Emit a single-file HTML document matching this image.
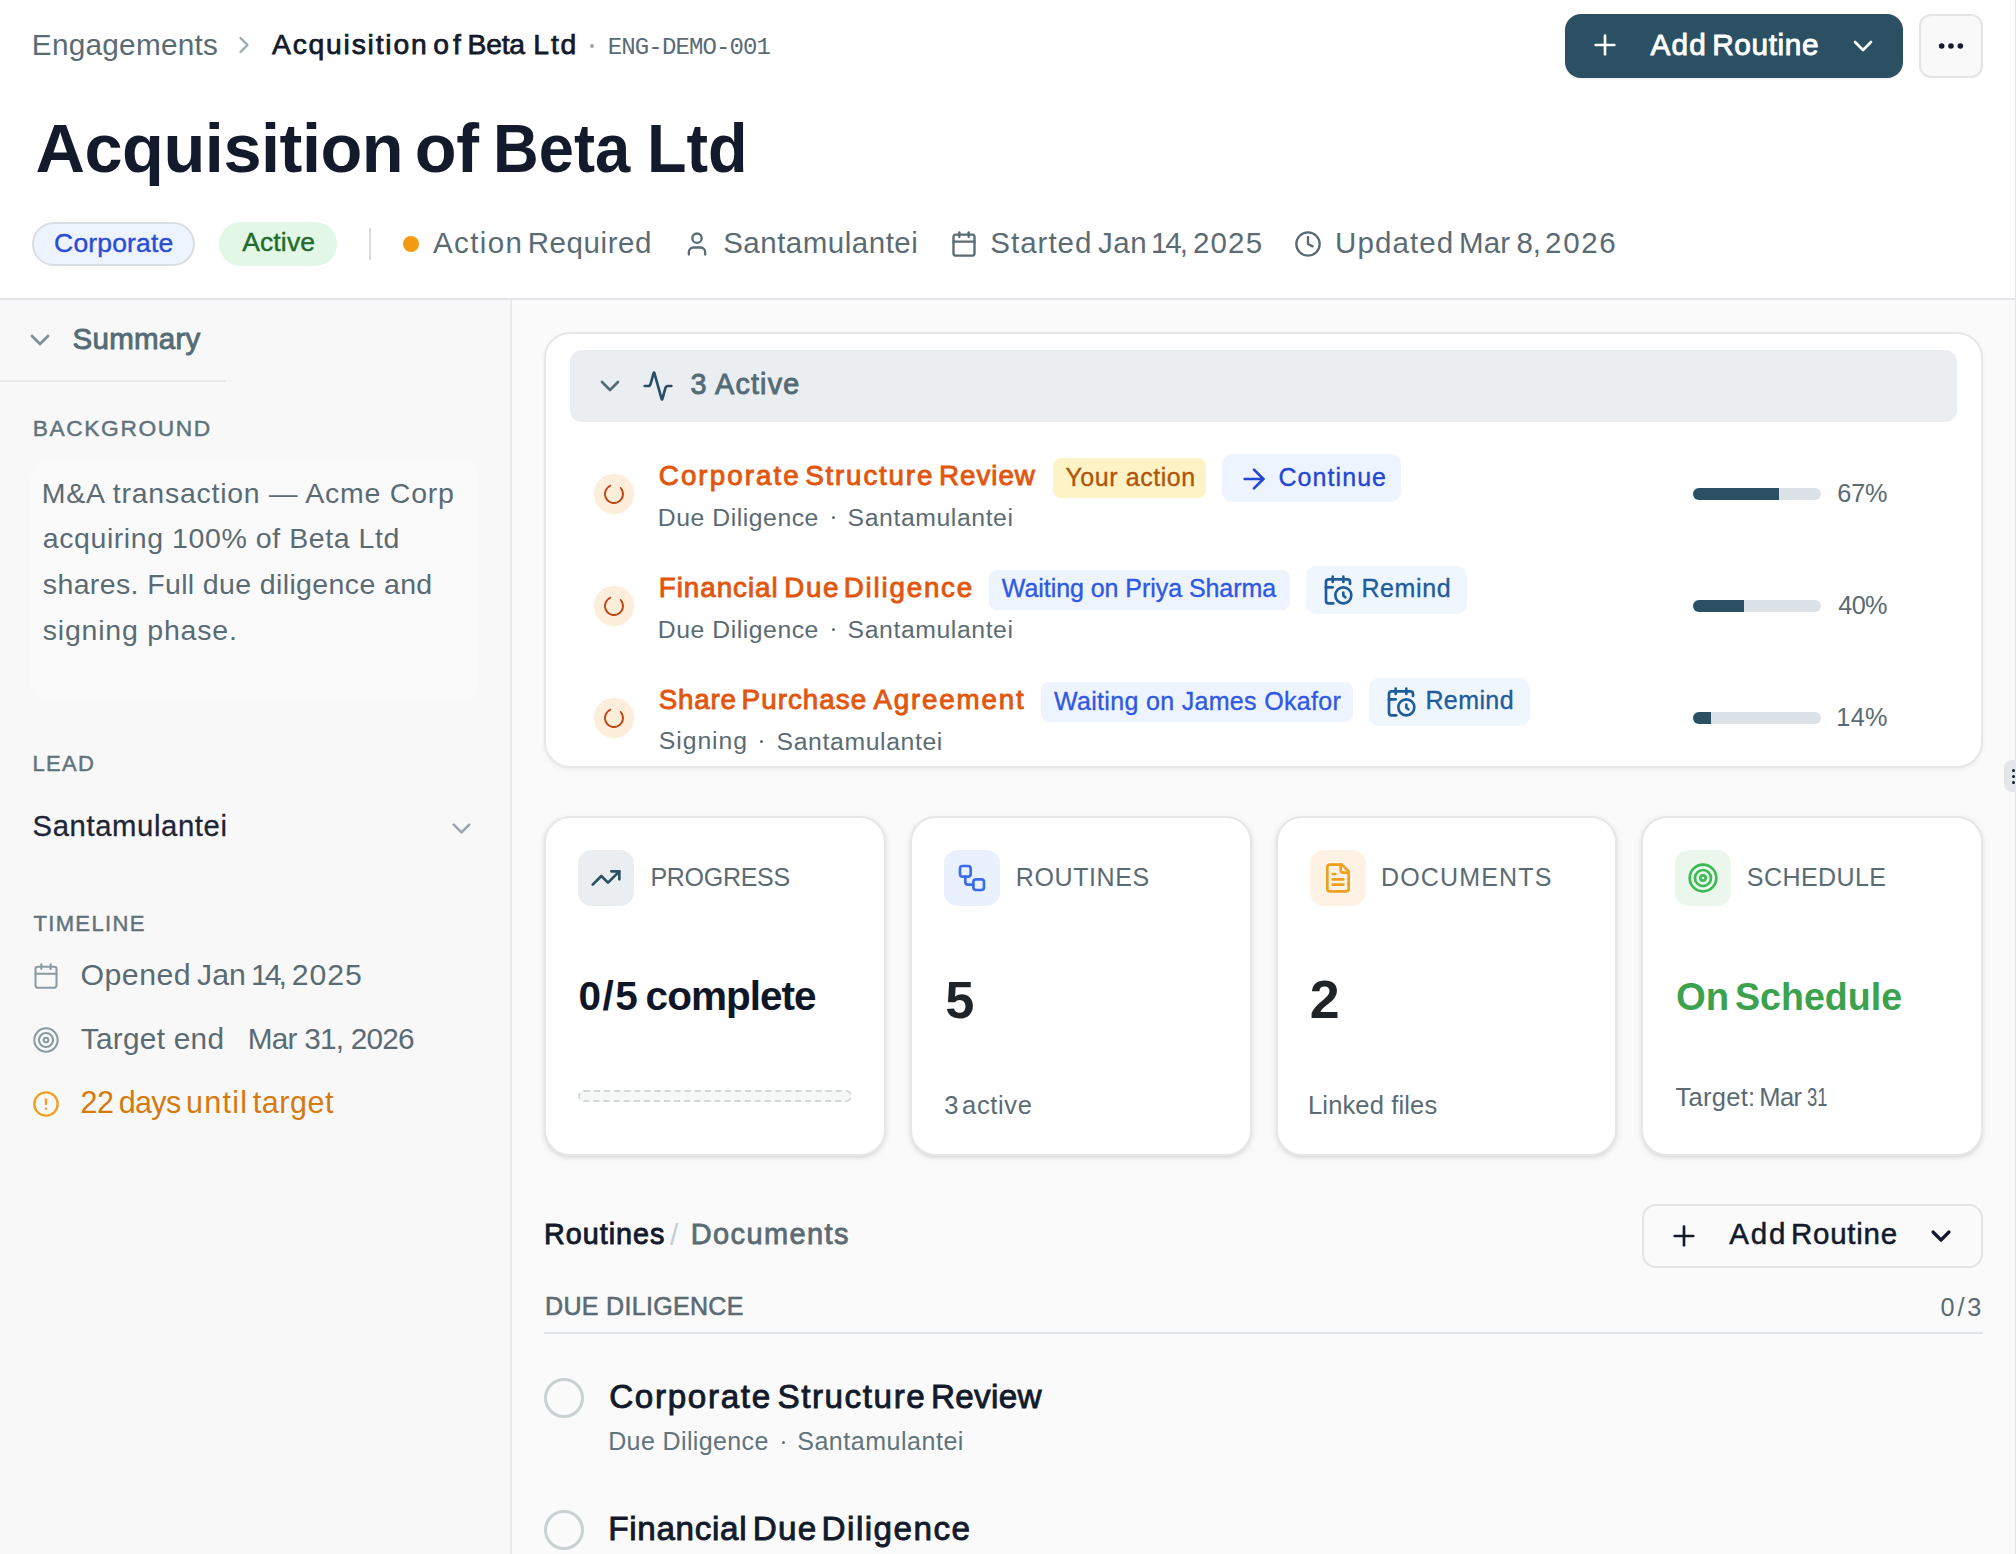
<!DOCTYPE html>
<html><head><meta charset="utf-8"><title>Acquisition of Beta Ltd</title>
<style>
html,body{margin:0;padding:0;width:2016px;height:1554px;overflow:hidden;background:#f9f9f9}
body{position:relative;font-family:"Liberation Sans",sans-serif}
.t{position:absolute;white-space:pre;}
.b{position:absolute;}
.i{position:absolute;overflow:visible}
</style></head><body>
<div class="b" style="left:0px;top:0px;width:2016px;height:298px;background:#ffffff"></div>
<div class="b" style="left:0px;top:298px;width:2016px;height:2px;background:#e3e5e8"></div>
<div class="b" style="left:0px;top:300px;width:510px;height:1254px;background:#f8f8f8"></div>
<div class="b" style="left:510px;top:300px;width:2px;height:1254px;background:#eaebed"></div>
<div class="b" style="left:512px;top:300px;width:1503px;height:1254px;background:#fafafa"></div>
<div class="b" style="left:2015px;top:0px;width:1px;height:1554px;background:#e3e5e8"></div>
<div class="t" style="left:31.80px;top:30.02px;font-size:29.75px;line-height:29.75px;letter-spacing:0.260px;font-weight:normal;color:#5a6b74;font-family:'Liberation Sans',sans-serif;">Engagements</div>
<svg class="i" style="left:230.00px;top:31.00px;" width="28" height="28" viewBox="0 0 24 24" fill="none" stroke="#9aa7ad" stroke-width="2" stroke-linecap="round" stroke-linejoin="round"><path d="m9 18 6-6-6-6"/></svg>
<div class="t" style="left:272.00px;top:29.89px;font-size:28.25px;line-height:28.25px;letter-spacing:1.800px;font-weight:normal;color:#121a2b;font-family:'Liberation Sans',sans-serif;-webkit-text-stroke:0.75px #121a2b;">Acquisition</div><div class="t" style="left:433.20px;top:29.89px;font-size:28.25px;line-height:28.25px;letter-spacing:4.200px;font-weight:normal;color:#121a2b;font-family:'Liberation Sans',sans-serif;-webkit-text-stroke:0.75px #121a2b;">of</div><div class="t" style="left:467.60px;top:29.89px;font-size:28.25px;line-height:28.25px;letter-spacing:-0.217px;font-weight:normal;color:#121a2b;font-family:'Liberation Sans',sans-serif;-webkit-text-stroke:0.75px #121a2b;">Beta</div><div class="t" style="left:533.30px;top:29.89px;font-size:28.25px;line-height:28.25px;letter-spacing:1.875px;font-weight:normal;color:#121a2b;font-family:'Liberation Sans',sans-serif;-webkit-text-stroke:0.75px #121a2b;">Ltd</div>
<div class="b" style="left:590px;top:44px;width:4px;height:4px;background:#9aa7ad;border-radius:2px"></div>
<div class="t" style="left:607.80px;top:35.61px;font-size:24.00px;line-height:24.00px;letter-spacing:-0.877px;font-weight:normal;color:#5a6b74;font-family:'Liberation Mono',monospace;">ENG-DEMO-001</div>
<div class="b" style="left:1565px;top:14px;width:338px;height:64px;background:#2b5064;border-radius:16px;box-shadow:0 1px 2px rgba(0,0,0,.08)"></div>
<svg class="i" style="left:1588.70px;top:29.40px;" width="32" height="32" viewBox="0 0 24 24" fill="none" stroke="#ffffff" stroke-width="2" stroke-linecap="round" stroke-linejoin="round"><path d="M5 12h14"/><path d="M12 5v14"/></svg>
<div class="t" style="left:1650.40px;top:29.82px;font-size:29.75px;line-height:29.75px;letter-spacing:1.225px;font-weight:normal;color:#ffffff;font-family:'Liberation Sans',sans-serif;-webkit-text-stroke:0.90px #ffffff;">Add</div><div class="t" style="left:1712.20px;top:29.82px;font-size:29.75px;line-height:29.75px;letter-spacing:0.642px;font-weight:normal;color:#ffffff;font-family:'Liberation Sans',sans-serif;-webkit-text-stroke:0.90px #ffffff;">Routine</div>
<svg class="i" style="left:1846.80px;top:30.30px;" width="32" height="32" viewBox="0 0 24 24" fill="none" stroke="#ffffff" stroke-width="2" stroke-linecap="round" stroke-linejoin="round"><path d="m6 9 6 6 6-6"/></svg>
<div class="b" style="left:1919px;top:14px;width:64px;height:64px;background:#f9f9f9;border:2px solid #e2e4e6;border-radius:12px;box-sizing:border-box"></div>
<svg class="i" style="left:1935.00px;top:29.80px;" width="32" height="32" viewBox="0 0 24 24" fill="none" stroke="#121a2b" stroke-width="2.2" stroke-linecap="round" stroke-linejoin="round"><circle cx="12" cy="12" r="1"/><circle cx="19" cy="12" r="1"/><circle cx="5" cy="12" r="1"/></svg>
<div class="t" style="left:35.50px;top:115.21px;font-size:68.50px;line-height:68.50px;letter-spacing:-0.475px;font-weight:bold;color:#121a2b;font-family:'Liberation Sans',sans-serif;">Acquisition</div>
<div class="t" style="left:414.70px;top:115.21px;font-size:68.50px;line-height:68.50px;letter-spacing:-0.300px;font-weight:bold;color:#121a2b;font-family:'Liberation Sans',sans-serif;">of</div>
<div class="t" style="left:492.90px;top:115.21px;font-size:68.50px;line-height:68.50px;letter-spacing:0.000px;font-weight:bold;color:#121a2b;font-family:'Liberation Sans',sans-serif;transform:scaleX(0.9239);transform-origin:0 0;">Beta</div>
<div class="t" style="left:647.00px;top:115.21px;font-size:68.50px;line-height:68.50px;letter-spacing:0.000px;font-weight:bold;color:#121a2b;font-family:'Liberation Sans',sans-serif;transform:scaleX(0.9454);transform-origin:0 0;">Ltd</div>
<div class="b" style="left:32px;top:222px;width:163px;height:44px;background:#eef4fd;border:2px solid #d9dee4;border-radius:22px;box-sizing:border-box"></div>
<div class="t" style="left:54.10px;top:229.87px;font-size:26.50px;line-height:26.50px;letter-spacing:0.156px;font-weight:normal;color:#2a4cd6;font-family:'Liberation Sans',sans-serif;-webkit-text-stroke:0.40px #2a4cd6;">Corporate</div>
<div class="b" style="left:219px;top:222px;width:118px;height:44px;background:#e2f7e5;border-radius:22px"></div>
<div class="t" style="left:242.20px;top:228.87px;font-size:26.50px;line-height:26.50px;letter-spacing:0.130px;font-weight:normal;color:#226b2c;font-family:'Liberation Sans',sans-serif;-webkit-text-stroke:0.40px #226b2c;">Active</div>
<div class="b" style="left:369px;top:228px;width:2px;height:32px;background:#d9dde2"></div>
<div class="b" style="left:403px;top:236px;width:16px;height:16px;background:#f29a12;border-radius:8px"></div>
<div class="t" style="left:432.90px;top:227.73px;font-size:29.50px;line-height:29.50px;letter-spacing:1.420px;font-weight:normal;color:#5a6b74;font-family:'Liberation Sans',sans-serif;">Action</div><div class="t" style="left:527.70px;top:227.73px;font-size:29.50px;line-height:29.50px;letter-spacing:0.586px;font-weight:normal;color:#5a6b74;font-family:'Liberation Sans',sans-serif;">Required</div>
<svg class="i" style="left:682.90px;top:230.10px;" width="28" height="28" viewBox="0 0 24 24" fill="none" stroke="#5a6b74" stroke-width="2" stroke-linecap="round" stroke-linejoin="round"><path d="M19 21v-2a4 4 0 0 0-4-4H9a4 4 0 0 0-4 4v2"/><circle cx="12" cy="7" r="4"/></svg>
<div class="t" style="left:723.20px;top:227.73px;font-size:29.50px;line-height:29.50px;letter-spacing:0.500px;font-weight:normal;color:#5a6b74;font-family:'Liberation Sans',sans-serif;">Santamulantei</div>
<svg class="i" style="left:949.70px;top:229.60px;" width="28" height="28" viewBox="0 0 24 24" fill="none" stroke="#5a6b74" stroke-width="2" stroke-linecap="round" stroke-linejoin="round"><path d="M8 2v4"/><path d="M16 2v4"/><rect width="18" height="18" x="3" y="4" rx="2"/><path d="M3 10h18"/></svg>
<div class="t" style="left:990.30px;top:227.73px;font-size:29.50px;line-height:29.50px;letter-spacing:1.000px;font-weight:normal;color:#5a6b74;font-family:'Liberation Sans',sans-serif;">Started</div><div class="t" style="left:1097.90px;top:227.73px;font-size:29.50px;line-height:29.50px;letter-spacing:0.625px;font-weight:normal;color:#5a6b74;font-family:'Liberation Sans',sans-serif;">Jan</div><div class="t" style="left:1151.00px;top:227.73px;font-size:29.50px;line-height:29.50px;letter-spacing:-2.050px;font-weight:normal;color:#5a6b74;font-family:'Liberation Sans',sans-serif;">14,</div><div class="t" style="left:1192.90px;top:227.73px;font-size:29.50px;line-height:29.50px;letter-spacing:1.183px;font-weight:normal;color:#5a6b74;font-family:'Liberation Sans',sans-serif;">2025</div>
<svg class="i" style="left:1293.80px;top:229.60px;" width="28" height="28" viewBox="0 0 24 24" fill="none" stroke="#5a6b74" stroke-width="2" stroke-linecap="round" stroke-linejoin="round"><circle cx="12" cy="12" r="10"/><polyline points="12 6 12 12 16 14"/></svg>
<div class="t" style="left:1335.10px;top:227.73px;font-size:29.50px;line-height:29.50px;letter-spacing:1.108px;font-weight:normal;color:#5a6b74;font-family:'Liberation Sans',sans-serif;">Updated</div><div class="t" style="left:1459.10px;top:227.73px;font-size:29.50px;line-height:29.50px;letter-spacing:0.100px;font-weight:normal;color:#5a6b74;font-family:'Liberation Sans',sans-serif;">Mar</div><div class="t" style="left:1516.40px;top:227.73px;font-size:29.50px;line-height:29.50px;letter-spacing:0.000px;font-weight:normal;color:#5a6b74;font-family:'Liberation Sans',sans-serif;">8,</div><div class="t" style="left:1545.10px;top:227.73px;font-size:29.50px;line-height:29.50px;letter-spacing:1.650px;font-weight:normal;color:#5a6b74;font-family:'Liberation Sans',sans-serif;">2026</div>
<svg class="i" style="left:23.90px;top:323.80px;" width="32" height="32" viewBox="0 0 24 24" fill="none" stroke="#7f9097" stroke-width="2" stroke-linecap="round" stroke-linejoin="round"><path d="m6 9 6 6 6-6"/></svg>
<div class="t" style="left:72.60px;top:323.83px;font-size:29.50px;line-height:29.50px;letter-spacing:0.233px;font-weight:normal;color:#556b75;font-family:'Liberation Sans',sans-serif;-webkit-text-stroke:0.90px #556b75;">Summary</div>
<div class="b" style="left:0px;top:380px;width:226px;height:2px;background:#e6e8ea"></div>
<div class="t" style="left:32.80px;top:416.74px;font-size:22.75px;line-height:22.75px;letter-spacing:1.594px;font-weight:normal;color:#60737c;font-family:'Liberation Sans',sans-serif;-webkit-text-stroke:0.45px #60737c;">BACKGROUND</div>
<div class="b" style="left:31px;top:460px;width:448px;height:241px;background:#fafafa;border-radius:16px"></div>
<div class="t" style="left:41.80px;top:478.77px;font-size:28.50px;line-height:28.50px;letter-spacing:0.738px;font-weight:normal;color:#5a6b74;font-family:'Liberation Sans',sans-serif;">M&amp;A transaction — Acme Corp</div>
<div class="t" style="left:42.80px;top:524.37px;font-size:28.50px;line-height:28.50px;letter-spacing:0.574px;font-weight:normal;color:#5a6b74;font-family:'Liberation Sans',sans-serif;">acquiring 100% of Beta Ltd</div>
<div class="t" style="left:42.80px;top:569.97px;font-size:28.50px;line-height:28.50px;letter-spacing:0.371px;font-weight:normal;color:#5a6b74;font-family:'Liberation Sans',sans-serif;">shares. Full due diligence and</div>
<div class="t" style="left:42.80px;top:615.57px;font-size:28.50px;line-height:28.50px;letter-spacing:0.785px;font-weight:normal;color:#5a6b74;font-family:'Liberation Sans',sans-serif;">signing phase.</div>
<div class="t" style="left:32.60px;top:753.08px;font-size:22.00px;line-height:22.00px;letter-spacing:1.250px;font-weight:normal;color:#60737c;font-family:'Liberation Sans',sans-serif;-webkit-text-stroke:0.45px #60737c;">LEAD</div>
<div class="t" style="left:32.60px;top:811.64px;font-size:29.25px;line-height:29.25px;letter-spacing:0.617px;font-weight:normal;color:#1e2636;font-family:'Liberation Sans',sans-serif;-webkit-text-stroke:0.30px #1e2636;">Santamulantei</div>
<svg class="i" style="left:446.40px;top:812.50px;" width="31" height="31" viewBox="0 0 24 24" fill="none" stroke="#9ca3af" stroke-width="2" stroke-linecap="round" stroke-linejoin="round"><path d="m6 9 6 6 6-6"/></svg>
<div class="t" style="left:33.40px;top:912.98px;font-size:22.00px;line-height:22.00px;letter-spacing:1.364px;font-weight:normal;color:#60737c;font-family:'Liberation Sans',sans-serif;-webkit-text-stroke:0.45px #60737c;">TIMELINE</div>
<svg class="i" style="left:31.90px;top:962.00px;" width="28" height="28" viewBox="0 0 24 24" fill="none" stroke="#8a9aa1" stroke-width="1.75" stroke-linecap="round" stroke-linejoin="round"><path d="M8 2v4"/><path d="M16 2v4"/><rect width="18" height="18" x="3" y="4" rx="2"/><path d="M3 10h18"/></svg>
<div class="t" style="left:80.50px;top:959.79px;font-size:30.25px;line-height:30.25px;letter-spacing:0.490px;font-weight:normal;color:#5a6b74;font-family:'Liberation Sans',sans-serif;">Opened</div><div class="t" style="left:197.00px;top:959.79px;font-size:30.25px;line-height:30.25px;letter-spacing:0.025px;font-weight:normal;color:#5a6b74;font-family:'Liberation Sans',sans-serif;">Jan</div><div class="t" style="left:250.90px;top:959.79px;font-size:30.25px;line-height:30.25px;letter-spacing:-2.975px;font-weight:normal;color:#5a6b74;font-family:'Liberation Sans',sans-serif;">14,</div><div class="t" style="left:291.70px;top:959.79px;font-size:30.25px;line-height:30.25px;letter-spacing:0.933px;font-weight:normal;color:#5a6b74;font-family:'Liberation Sans',sans-serif;">2025</div>
<svg class="i" style="left:31.90px;top:1025.80px;" width="28" height="28" viewBox="0 0 24 24" fill="none" stroke="#8a9aa1" stroke-width="1.75" stroke-linecap="round" stroke-linejoin="round"><circle cx="12" cy="12" r="10"/><circle cx="12" cy="12" r="6"/><circle cx="12" cy="12" r="2"/></svg>
<div class="t" style="left:80.80px;top:1023.82px;font-size:29.75px;line-height:29.75px;letter-spacing:0.289px;font-weight:normal;color:#5a6b74;font-family:'Liberation Sans',sans-serif;">Target end</div>
<div class="t" style="left:247.80px;top:1023.82px;font-size:29.75px;line-height:29.75px;letter-spacing:-0.782px;font-weight:normal;color:#5a6b74;font-family:'Liberation Sans',sans-serif;">Mar 31, 2026</div>
<svg class="i" style="left:31.90px;top:1090.00px;" width="28" height="28" viewBox="0 0 24 24" fill="none" stroke="#f0a020" stroke-width="2" stroke-linecap="round" stroke-linejoin="round"><circle cx="12" cy="12" r="10"/><line x1="12" x2="12" y1="8" y2="12"/><line x1="12" x2="12.01" y1="16" y2="16"/></svg>
<div class="t" style="left:80.50px;top:1087.08px;font-size:30.50px;line-height:30.50px;letter-spacing:-0.550px;font-weight:normal;color:#d57a0e;font-family:'Liberation Sans',sans-serif;">22</div><div class="t" style="left:118.80px;top:1087.08px;font-size:30.50px;line-height:30.50px;letter-spacing:-0.683px;font-weight:normal;color:#d57a0e;font-family:'Liberation Sans',sans-serif;">days</div><div class="t" style="left:186.10px;top:1087.08px;font-size:30.50px;line-height:30.50px;letter-spacing:1.238px;font-weight:normal;color:#d57a0e;font-family:'Liberation Sans',sans-serif;">until</div><div class="t" style="left:252.70px;top:1087.08px;font-size:30.50px;line-height:30.50px;letter-spacing:0.580px;font-weight:normal;color:#d57a0e;font-family:'Liberation Sans',sans-serif;">target</div>
<div class="b" style="left:544px;top:332px;width:1439px;height:436px;background:#ffffff;border:2px solid #e5e7e9;border-radius:26px;box-sizing:border-box;box-shadow:0 2px 4px rgba(0,0,0,.05)"></div>
<div class="b" style="left:570px;top:350px;width:1387px;height:72px;background:#eaeef1;border-radius:12px"></div>
<svg class="i" style="left:593.90px;top:370.30px;" width="32" height="32" viewBox="0 0 24 24" fill="none" stroke="#556b75" stroke-width="2" stroke-linecap="round" stroke-linejoin="round"><path d="m6 9 6 6 6-6"/></svg>
<svg class="i" style="left:642.30px;top:369.70px;" width="32" height="32" viewBox="0 0 24 24" fill="none" stroke="#264f66" stroke-width="2" stroke-linecap="round" stroke-linejoin="round"><path d="M22 12h-2.48a2 2 0 0 0-1.93 1.46l-2.35 8.36a.25.25 0 0 1-.48 0L9.24 2.18a.25.25 0 0 0-.48 0l-2.35 8.36A2 2 0 0 1 4.49 12H2"/></svg>
<div class="t" style="left:690.40px;top:370.06px;font-size:28.75px;line-height:28.75px;letter-spacing:1.157px;font-weight:normal;color:#556b75;font-family:'Liberation Sans',sans-serif;-webkit-text-stroke:0.90px #556b75;">3 Active</div>
<div class="b" style="left:594px;top:474px;width:40px;height:40px;background:#fdeedb;border-radius:20px"></div>
<svg class="i" style="left:602.00px;top:482.00px;transform:rotate(-42deg)" width="24" height="24" viewBox="0 0 24 24" fill="none" stroke="#c2410c" stroke-width="1.8" stroke-linecap="round" stroke-linejoin="round"><path d="M21 12a9 9 0 1 1-6.219-8.56"/></svg>
<div class="t" style="left:658.80px;top:462.31px;font-size:27.75px;line-height:27.75px;letter-spacing:2.050px;font-weight:normal;color:#e2560d;font-family:'Liberation Sans',sans-serif;-webkit-text-stroke:0.90px #e2560d;">Corporate</div><div class="t" style="left:805.20px;top:462.31px;font-size:27.75px;line-height:27.75px;letter-spacing:1.825px;font-weight:normal;color:#e2560d;font-family:'Liberation Sans',sans-serif;-webkit-text-stroke:0.90px #e2560d;">Structure</div><div class="t" style="left:939.00px;top:462.31px;font-size:27.75px;line-height:27.75px;letter-spacing:0.980px;font-weight:normal;color:#e2560d;font-family:'Liberation Sans',sans-serif;-webkit-text-stroke:0.90px #e2560d;">Review</div>
<div class="t" style="left:657.80px;top:506.15px;font-size:24.75px;line-height:24.75px;letter-spacing:0.542px;font-weight:normal;color:#5a6b74;font-family:'Liberation Sans',sans-serif;">Due Diligence</div>
<div class="b" style="left:831.5px;top:516.2px;width:3px;height:3px;background:#5a6b74;border-radius:2px"></div>
<div class="t" style="left:847.60px;top:506.15px;font-size:24.75px;line-height:24.75px;letter-spacing:0.596px;font-weight:normal;color:#5a6b74;font-family:'Liberation Sans',sans-serif;">Santamulantei</div>
<div class="b" style="left:1693px;top:488px;width:128px;height:12px;background:#dce3e8;border-radius:6px;overflow:hidden"></div>
<div class="b" style="left:1693px;top:488px;width:86px;height:12px;background:#2b5064;border-radius:6px 0 0 6px"></div>
<div class="t" style="left:1837.20px;top:480.83px;font-size:25.25px;line-height:25.25px;letter-spacing:-0.075px;font-weight:normal;color:#5a6b74;font-family:'Liberation Sans',sans-serif;">67%</div>
<div class="b" style="left:594px;top:586px;width:40px;height:40px;background:#fdeedb;border-radius:20px"></div>
<svg class="i" style="left:602.00px;top:594.00px;transform:rotate(-42deg)" width="24" height="24" viewBox="0 0 24 24" fill="none" stroke="#c2410c" stroke-width="1.8" stroke-linecap="round" stroke-linejoin="round"><path d="M21 12a9 9 0 1 1-6.219-8.56"/></svg>
<div class="t" style="left:658.80px;top:574.31px;font-size:27.75px;line-height:27.75px;letter-spacing:0.969px;font-weight:normal;color:#e2560d;font-family:'Liberation Sans',sans-serif;-webkit-text-stroke:0.90px #e2560d;">Financial</div><div class="t" style="left:784.20px;top:574.31px;font-size:27.75px;line-height:27.75px;letter-spacing:1.650px;font-weight:normal;color:#e2560d;font-family:'Liberation Sans',sans-serif;-webkit-text-stroke:0.90px #e2560d;">Due</div><div class="t" style="left:843.80px;top:574.31px;font-size:27.75px;line-height:27.75px;letter-spacing:1.781px;font-weight:normal;color:#e2560d;font-family:'Liberation Sans',sans-serif;-webkit-text-stroke:0.90px #e2560d;">Diligence</div>
<div class="t" style="left:657.80px;top:618.15px;font-size:24.75px;line-height:24.75px;letter-spacing:0.542px;font-weight:normal;color:#5a6b74;font-family:'Liberation Sans',sans-serif;">Due Diligence</div>
<div class="b" style="left:831.5px;top:628.2px;width:3px;height:3px;background:#5a6b74;border-radius:2px"></div>
<div class="t" style="left:847.60px;top:618.15px;font-size:24.75px;line-height:24.75px;letter-spacing:0.596px;font-weight:normal;color:#5a6b74;font-family:'Liberation Sans',sans-serif;">Santamulantei</div>
<div class="b" style="left:1693px;top:600px;width:128px;height:12px;background:#dce3e8;border-radius:6px;overflow:hidden"></div>
<div class="b" style="left:1693px;top:600px;width:51px;height:12px;background:#2b5064;border-radius:6px 0 0 6px"></div>
<div class="t" style="left:1838.20px;top:592.83px;font-size:25.25px;line-height:25.25px;letter-spacing:-0.575px;font-weight:normal;color:#5a6b74;font-family:'Liberation Sans',sans-serif;">40%</div>
<div class="b" style="left:594px;top:698px;width:40px;height:40px;background:#fdeedb;border-radius:20px"></div>
<svg class="i" style="left:602.00px;top:706.00px;transform:rotate(-42deg)" width="24" height="24" viewBox="0 0 24 24" fill="none" stroke="#c2410c" stroke-width="1.8" stroke-linecap="round" stroke-linejoin="round"><path d="M21 12a9 9 0 1 1-6.219-8.56"/></svg>
<div class="t" style="left:658.80px;top:686.31px;font-size:27.75px;line-height:27.75px;letter-spacing:0.788px;font-weight:normal;color:#e2560d;font-family:'Liberation Sans',sans-serif;-webkit-text-stroke:0.90px #e2560d;">Share</div><div class="t" style="left:741.60px;top:686.31px;font-size:27.75px;line-height:27.75px;letter-spacing:1.050px;font-weight:normal;color:#e2560d;font-family:'Liberation Sans',sans-serif;-webkit-text-stroke:0.90px #e2560d;">Purchase</div><div class="t" style="left:873.40px;top:686.31px;font-size:27.75px;line-height:27.75px;letter-spacing:1.831px;font-weight:normal;color:#e2560d;font-family:'Liberation Sans',sans-serif;-webkit-text-stroke:0.90px #e2560d;">Agreement</div>
<div class="t" style="left:658.80px;top:728.75px;font-size:24.75px;line-height:24.75px;letter-spacing:0.942px;font-weight:normal;color:#5a6b74;font-family:'Liberation Sans',sans-serif;">Signing</div>
<div class="b" style="left:760.3px;top:740.2px;width:3px;height:3px;background:#5a6b74;border-radius:2px"></div>
<div class="t" style="left:776.60px;top:730.15px;font-size:24.75px;line-height:24.75px;letter-spacing:0.629px;font-weight:normal;color:#5a6b74;font-family:'Liberation Sans',sans-serif;">Santamulantei</div>
<div class="b" style="left:1693px;top:712px;width:128px;height:12px;background:#dce3e8;border-radius:6px;overflow:hidden"></div>
<div class="b" style="left:1693px;top:712px;width:18px;height:12px;background:#2b5064;border-radius:6px 0 0 6px"></div>
<div class="t" style="left:1836.20px;top:704.83px;font-size:25.25px;line-height:25.25px;letter-spacing:0.425px;font-weight:normal;color:#5a6b74;font-family:'Liberation Sans',sans-serif;">14%</div>
<div class="b" style="left:1053px;top:458px;width:153px;height:40px;background:#fdf3c7;border-radius:8px"></div>
<div class="t" style="left:1065.40px;top:465.44px;font-size:25.00px;line-height:25.00px;letter-spacing:0.565px;font-weight:normal;color:#b0560a;font-family:'Liberation Sans',sans-serif;-webkit-text-stroke:0.35px #b0560a;">Your action</div>
<div class="b" style="left:1222px;top:454px;width:179px;height:48px;background:#eef4fe;border-radius:10px"></div>
<svg class="i" style="left:1237.90px;top:462.60px;" width="32" height="32" viewBox="0 0 24 24" fill="none" stroke="#2446d6" stroke-width="2" stroke-linecap="round" stroke-linejoin="round"><path d="M5 12h14"/><path d="m12 5 7 7-7 7"/></svg>
<div class="t" style="left:1278.40px;top:465.24px;font-size:25.00px;line-height:25.00px;letter-spacing:1.079px;font-weight:normal;color:#2446d6;font-family:'Liberation Sans',sans-serif;-webkit-text-stroke:0.35px #2446d6;">Continue</div>
<div class="b" style="left:989px;top:570px;width:301px;height:40px;background:#eef4fe;border-radius:8px"></div>
<div class="t" style="left:1001.80px;top:575.64px;font-size:25.00px;line-height:25.00px;letter-spacing:-0.055px;font-weight:normal;color:#2f58e6;font-family:'Liberation Sans',sans-serif;-webkit-text-stroke:0.35px #2f58e6;">Waiting on Priya Sharma</div>
<div class="b" style="left:1306px;top:566px;width:161px;height:48px;background:#eff6fd;border-radius:10px"></div>
<svg class="i" style="left:1321.50px;top:573.70px;" width="32" height="32" viewBox="0 0 24 24" fill="none" stroke="#1f5c9e" stroke-width="2" stroke-linecap="round" stroke-linejoin="round"><path d="M21 7.5V6a2 2 0 0 0-2-2H5a2 2 0 0 0-2 2v14a2 2 0 0 0 2 2h3.5"/><path d="M16 2v4"/><path d="M8 2v4"/><path d="M3 10h5"/><path d="M17.5 17.5 16 16.3V14"/><circle cx="16" cy="16" r="6"/></svg>
<div class="t" style="left:1361.40px;top:576.44px;font-size:25.00px;line-height:25.00px;letter-spacing:0.610px;font-weight:normal;color:#1f5c9e;font-family:'Liberation Sans',sans-serif;-webkit-text-stroke:0.35px #1f5c9e;">Remind</div>
<div class="b" style="left:1041px;top:682px;width:312px;height:40px;background:#eef4fe;border-radius:8px"></div>
<div class="t" style="left:1054.00px;top:689.04px;font-size:25.00px;line-height:25.00px;letter-spacing:0.320px;font-weight:normal;color:#2f58e6;font-family:'Liberation Sans',sans-serif;-webkit-text-stroke:0.35px #2f58e6;">Waiting on James Okafor</div>
<div class="b" style="left:1369px;top:678px;width:161px;height:48px;background:#eff6fd;border-radius:10px"></div>
<svg class="i" style="left:1384.50px;top:685.70px;" width="32" height="32" viewBox="0 0 24 24" fill="none" stroke="#1f5c9e" stroke-width="2" stroke-linecap="round" stroke-linejoin="round"><path d="M21 7.5V6a2 2 0 0 0-2-2H5a2 2 0 0 0-2 2v14a2 2 0 0 0 2 2h3.5"/><path d="M16 2v4"/><path d="M8 2v4"/><path d="M3 10h5"/><path d="M17.5 17.5 16 16.3V14"/><circle cx="16" cy="16" r="6"/></svg>
<div class="t" style="left:1425.40px;top:688.44px;font-size:25.00px;line-height:25.00px;letter-spacing:0.410px;font-weight:normal;color:#1f5c9e;font-family:'Liberation Sans',sans-serif;-webkit-text-stroke:0.35px #1f5c9e;">Remind</div>
<div class="b" style="left:2004px;top:760px;width:14px;height:32px;background:#e4e6e9;border-radius:8px 0 0 8px"></div>
<div class="b" style="left:2012px;top:768.5px;width:3px;height:3px;background:#121a2b;border-radius:2px"></div>
<div class="b" style="left:2012px;top:774.5px;width:3px;height:3px;background:#121a2b;border-radius:2px"></div>
<div class="b" style="left:2012px;top:780.5px;width:3px;height:3px;background:#121a2b;border-radius:2px"></div>
<div class="b" style="left:544.0px;top:816px;width:341.75px;height:340px;background:#ffffff;border:2px solid #e5e7e9;border-radius:26px;box-sizing:border-box;box-shadow:0 2px 6px rgba(0,0,0,.1),0 2px 4px -2px rgba(0,0,0,.1)"></div>
<div class="b" style="left:578.0px;top:850px;width:56px;height:56px;background:#eaeef1;border-radius:14px"></div>
<svg class="i" style="left:590.00px;top:862.00px;" width="32" height="32" viewBox="0 0 24 24" fill="none" stroke="#2b5064" stroke-width="2" stroke-linecap="round" stroke-linejoin="round"><polyline points="22 7 13.5 15.5 8.5 10.5 2 17"/><polyline points="16 7 22 7 22 13"/></svg>
<div class="t" style="left:650.40px;top:864.84px;font-size:25.00px;line-height:25.00px;letter-spacing:-0.271px;font-weight:normal;color:#5a6b74;font-family:'Liberation Sans',sans-serif;">PROGRESS</div>
<div class="b" style="left:909.75px;top:816px;width:341.75px;height:340px;background:#ffffff;border:2px solid #e5e7e9;border-radius:26px;box-sizing:border-box;box-shadow:0 2px 6px rgba(0,0,0,.1),0 2px 4px -2px rgba(0,0,0,.1)"></div>
<div class="b" style="left:943.75px;top:850px;width:56px;height:56px;background:#e9f0fe;border-radius:14px"></div>
<svg class="i" style="left:955.75px;top:862.00px;" width="32" height="32" viewBox="0 0 24 24" fill="none" stroke="#3b6cf0" stroke-width="2" stroke-linecap="round" stroke-linejoin="round"><rect width="8" height="8" x="3" y="3" rx="2"/><path d="M7 11v4a2 2 0 0 0 2 2h4"/><rect width="8" height="8" x="13" y="13" rx="2"/></svg>
<div class="t" style="left:1015.80px;top:864.84px;font-size:25.00px;line-height:25.00px;letter-spacing:0.600px;font-weight:normal;color:#5a6b74;font-family:'Liberation Sans',sans-serif;">ROUTINES</div>
<div class="b" style="left:1275.5px;top:816px;width:341.75px;height:340px;background:#ffffff;border:2px solid #e5e7e9;border-radius:26px;box-sizing:border-box;box-shadow:0 2px 6px rgba(0,0,0,.1),0 2px 4px -2px rgba(0,0,0,.1)"></div>
<div class="b" style="left:1309.5px;top:850px;width:56px;height:56px;background:#fdf2e3;border-radius:14px"></div>
<svg class="i" style="left:1321.50px;top:862.00px;" width="32" height="32" viewBox="0 0 24 24" fill="none" stroke="#f0a020" stroke-width="2" stroke-linecap="round" stroke-linejoin="round"><path d="M15 2H6a2 2 0 0 0-2 2v16a2 2 0 0 0 2 2h12a2 2 0 0 0 2-2V7Z"/><path d="M14 2v4a2 2 0 0 0 2 2h4"/><path d="M10 9H8"/><path d="M16 13H8"/><path d="M16 17H8"/></svg>
<div class="t" style="left:1381.00px;top:864.84px;font-size:25.00px;line-height:25.00px;letter-spacing:1.163px;font-weight:normal;color:#5a6b74;font-family:'Liberation Sans',sans-serif;">DOCUMENTS</div>
<div class="b" style="left:1641.25px;top:816px;width:341.75px;height:340px;background:#ffffff;border:2px solid #e5e7e9;border-radius:26px;box-sizing:border-box;box-shadow:0 2px 6px rgba(0,0,0,.1),0 2px 4px -2px rgba(0,0,0,.1)"></div>
<div class="b" style="left:1675.25px;top:850px;width:56px;height:56px;background:#ebf7ed;border-radius:14px"></div>
<svg class="i" style="left:1687.25px;top:862.00px;" width="32" height="32" viewBox="0 0 24 24" fill="none" stroke="#3cba54" stroke-width="2" stroke-linecap="round" stroke-linejoin="round"><circle cx="12" cy="12" r="10"/><circle cx="12" cy="12" r="6"/><circle cx="12" cy="12" r="2"/></svg>
<div class="t" style="left:1746.80px;top:864.84px;font-size:25.00px;line-height:25.00px;letter-spacing:0.436px;font-weight:normal;color:#5a6b74;font-family:'Liberation Sans',sans-serif;">SCHEDULE</div>
<div class="t" style="left:578.40px;top:976.12px;font-size:40.50px;line-height:40.50px;letter-spacing:1.550px;font-weight:bold;color:#0f1628;font-family:'Liberation Sans',sans-serif;">0/5</div><div class="t" style="left:645.60px;top:976.12px;font-size:40.50px;line-height:40.50px;letter-spacing:-0.971px;font-weight:bold;color:#0f1628;font-family:'Liberation Sans',sans-serif;">complete</div>
<div class="b" style="left:578px;top:1090px;width:274px;height:12px;background:#f6f7f7;border:2px dashed #d3d8da;border-radius:6px;box-sizing:border-box"></div>
<div class="t" style="left:945.20px;top:974.27px;font-size:52.25px;line-height:52.25px;letter-spacing:-1.250px;font-weight:bold;color:#1f2428;font-family:'Liberation Sans',sans-serif;">5</div>
<div class="t" style="left:944.20px;top:1092.91px;font-size:25.50px;line-height:25.50px;letter-spacing:-1.900px;font-weight:normal;color:#5a6b74;font-family:'Liberation Sans',sans-serif;">3</div><div class="t" style="left:962.10px;top:1092.91px;font-size:25.50px;line-height:25.50px;letter-spacing:0.620px;font-weight:normal;color:#5a6b74;font-family:'Liberation Sans',sans-serif;">active</div>
<div class="t" style="left:1309.80px;top:973.00px;font-size:53.75px;line-height:53.75px;letter-spacing:-3.200px;font-weight:bold;color:#1f2428;font-family:'Liberation Sans',sans-serif;">2</div>
<div class="t" style="left:1308.00px;top:1092.91px;font-size:25.50px;line-height:25.50px;letter-spacing:0.145px;font-weight:normal;color:#5a6b74;font-family:'Liberation Sans',sans-serif;">Linked files</div>
<div class="t" style="left:1675.50px;top:976.96px;font-size:39.50px;line-height:39.50px;letter-spacing:0.000px;font-weight:bold;color:#3ca24e;font-family:'Liberation Sans',sans-serif;transform:scaleX(0.9696);transform-origin:0 0;">On</div><div class="t" style="left:1735.00px;top:976.96px;font-size:39.50px;line-height:39.50px;letter-spacing:0.000px;font-weight:bold;color:#3ca24e;font-family:'Liberation Sans',sans-serif;transform:scaleX(0.9512);transform-origin:0 0;">Schedule</div>
<div class="t" style="left:1675.50px;top:1084.81px;font-size:25.50px;line-height:25.50px;letter-spacing:0.275px;font-weight:normal;color:#5a6b74;font-family:'Liberation Sans',sans-serif;">Target:</div><div class="t" style="left:1759.20px;top:1084.81px;font-size:25.50px;line-height:25.50px;letter-spacing:-0.550px;font-weight:normal;color:#5a6b74;font-family:'Liberation Sans',sans-serif;">Mar</div><div class="t" style="left:1807.00px;top:1084.81px;font-size:25.50px;line-height:25.50px;letter-spacing:0.000px;font-weight:normal;color:#5a6b74;font-family:'Liberation Sans',sans-serif;transform:scaleX(0.7244);transform-origin:0 0;">31</div>
<div class="t" style="left:544.00px;top:1220.06px;font-size:28.75px;line-height:28.75px;letter-spacing:0.993px;font-weight:normal;color:#121a2b;font-family:'Liberation Sans',sans-serif;-webkit-text-stroke:0.90px #121a2b;">Routines</div>
<div class="t" style="left:670.00px;top:1219.81px;font-size:30.00px;line-height:30.00px;letter-spacing:0.000px;font-weight:normal;color:#c6cdd1;font-family:'Liberation Sans',sans-serif;">/</div>
<div class="t" style="left:690.80px;top:1219.85px;font-size:29.00px;line-height:29.00px;letter-spacing:1.369px;font-weight:normal;color:#5a6b74;font-family:'Liberation Sans',sans-serif;-webkit-text-stroke:0.80px #5a6b74;">Documents</div>
<div class="b" style="left:1642px;top:1204px;width:341px;height:64px;background:#fafafa;border:2px solid #e3e4e6;border-radius:14px;box-sizing:border-box"></div>
<svg class="i" style="left:1668.00px;top:1220.00px;" width="32" height="32" viewBox="0 0 24 24" fill="none" stroke="#121a2b" stroke-width="2" stroke-linecap="round" stroke-linejoin="round"><path d="M5 12h14"/><path d="M12 5v14"/></svg>
<div class="t" style="left:1729.20px;top:1218.63px;font-size:29.50px;line-height:29.50px;letter-spacing:1.850px;font-weight:normal;color:#121a2b;font-family:'Liberation Sans',sans-serif;-webkit-text-stroke:0.50px #121a2b;">Add</div><div class="t" style="left:1791.00px;top:1218.63px;font-size:29.50px;line-height:29.50px;letter-spacing:0.750px;font-weight:normal;color:#121a2b;font-family:'Liberation Sans',sans-serif;-webkit-text-stroke:0.50px #121a2b;">Routine</div>
<svg class="i" style="left:1924.50px;top:1220.20px;" width="32" height="32" viewBox="0 0 24 24" fill="none" stroke="#121a2b" stroke-width="2.4" stroke-linecap="round" stroke-linejoin="round"><path d="m6 9 6 6 6-6"/></svg>
<div class="t" style="left:545.00px;top:1293.84px;font-size:25.00px;line-height:25.00px;letter-spacing:0.325px;font-weight:normal;color:#5a6b74;font-family:'Liberation Sans',sans-serif;-webkit-text-stroke:0.60px #5a6b74;">DUE DILIGENCE</div>
<div class="t" style="left:1940.40px;top:1294.63px;font-size:25.25px;line-height:25.25px;letter-spacing:2.950px;font-weight:normal;color:#5a6b74;font-family:'Liberation Sans',sans-serif;">0/3</div>
<div class="b" style="left:544px;top:1332px;width:1439px;height:2px;background:#e3e6e8"></div>
<div class="b" style="left:544px;top:1378px;width:40px;height:40px;border:3px solid #c9d1d3;border-radius:20px;box-sizing:border-box"></div>
<div class="t" style="left:609.20px;top:1380.05px;font-size:33.25px;line-height:33.25px;letter-spacing:1.644px;font-weight:normal;color:#121a2b;font-family:'Liberation Sans',sans-serif;-webkit-text-stroke:0.90px #121a2b;">Corporate</div><div class="t" style="left:777.40px;top:1380.05px;font-size:33.25px;line-height:33.25px;letter-spacing:1.562px;font-weight:normal;color:#121a2b;font-family:'Liberation Sans',sans-serif;-webkit-text-stroke:0.90px #121a2b;">Structure</div><div class="t" style="left:931.00px;top:1380.05px;font-size:33.25px;line-height:33.25px;letter-spacing:0.300px;font-weight:normal;color:#121a2b;font-family:'Liberation Sans',sans-serif;-webkit-text-stroke:0.90px #121a2b;">Review</div>
<div class="b" style="left:544px;top:1510px;width:40px;height:40px;border:3px solid #c9d1d3;border-radius:20px;box-sizing:border-box"></div>
<div class="t" style="left:608.20px;top:1512.05px;font-size:33.25px;line-height:33.25px;letter-spacing:0.669px;font-weight:normal;color:#121a2b;font-family:'Liberation Sans',sans-serif;-webkit-text-stroke:0.90px #121a2b;">Financial</div><div class="t" style="left:752.80px;top:1512.05px;font-size:33.25px;line-height:33.25px;letter-spacing:1.200px;font-weight:normal;color:#121a2b;font-family:'Liberation Sans',sans-serif;-webkit-text-stroke:0.90px #121a2b;">Due</div><div class="t" style="left:821.60px;top:1512.05px;font-size:33.25px;line-height:33.25px;letter-spacing:1.456px;font-weight:normal;color:#121a2b;font-family:'Liberation Sans',sans-serif;-webkit-text-stroke:0.90px #121a2b;">Diligence</div>
<div class="t" style="left:608.20px;top:1429.04px;font-size:25.00px;line-height:25.00px;letter-spacing:0.379px;font-weight:normal;color:#5f747d;font-family:'Liberation Sans',sans-serif;">Due Diligence</div>
<div class="b" style="left:781.5px;top:1440.7px;width:3px;height:3px;background:#5f747d;border-radius:2px"></div>
<div class="t" style="left:797.20px;top:1429.04px;font-size:25.00px;line-height:25.00px;letter-spacing:0.529px;font-weight:normal;color:#5f747d;font-family:'Liberation Sans',sans-serif;">Santamulantei</div>
<script>(function(){try{var w=window.innerWidth;if(w>0&&Math.abs(w-2016)>4){document.documentElement.style.zoom=String(w/2016);}}catch(e){}})();</script>
</body></html>
